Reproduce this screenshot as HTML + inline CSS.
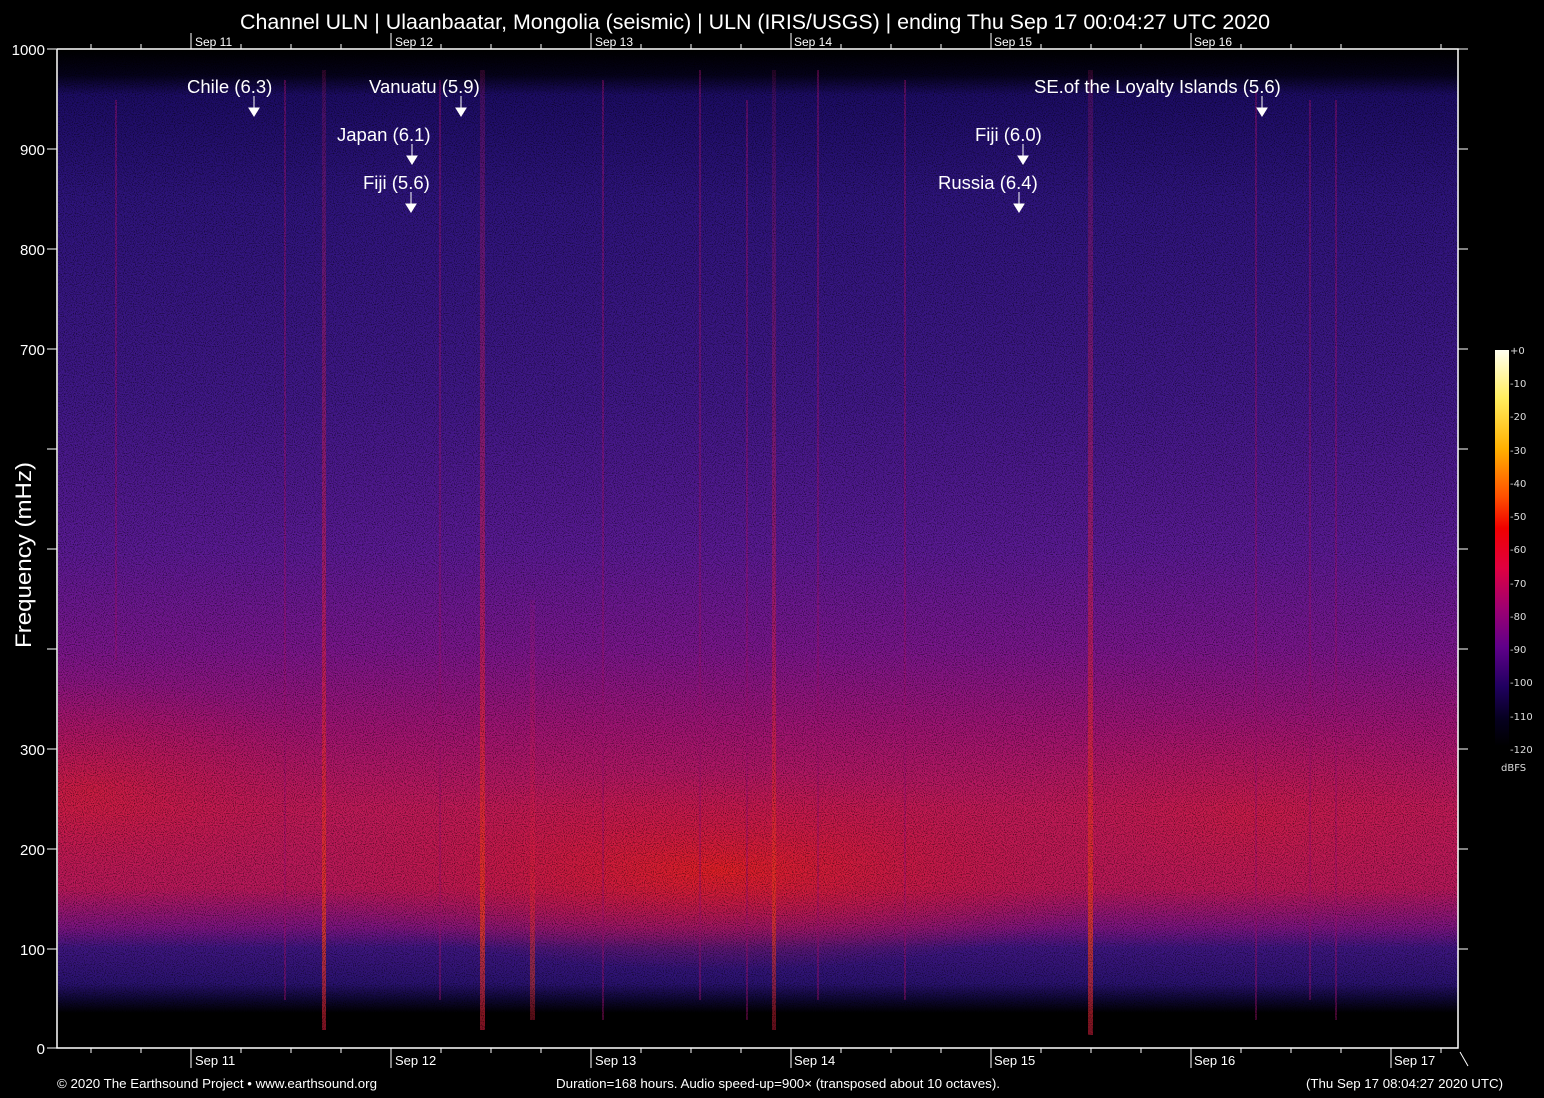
<!DOCTYPE html>
<html><head><meta charset="utf-8"><style>
html,body{margin:0;padding:0;background:#000;}
body{width:1544px;height:1098px;overflow:hidden;position:relative;font-family:"Liberation Sans",sans-serif;color:#fff;}
</style></head><body>
<svg width="1544" height="1098" viewBox="0 0 1544 1098" xmlns="http://www.w3.org/2000/svg" style="position:absolute;left:0;top:0">
<defs>
<clipPath id="pc"><rect x="58" y="50" width="1400" height="998"/></clipPath>
<linearGradient id="vg" x1="0" y1="0" x2="0" y2="1">
<stop offset="0" stop-color="#000"/>
<stop offset="0.025" stop-color="#05021a"/>
<stop offset="0.045" stop-color="#1c0c64"/>
<stop offset="0.15" stop-color="#2e147c"/>
<stop offset="0.35" stop-color="#401888"/>
<stop offset="0.5" stop-color="#5a1a94"/>
<stop offset="0.6" stop-color="#7a168c"/>
<stop offset="0.68" stop-color="#a01472"/>
<stop offset="0.76" stop-color="#c01a58"/>
<stop offset="0.84" stop-color="#b8185a"/>
<stop offset="0.88" stop-color="#7a1480"/>
<stop offset="0.9" stop-color="#3e1680"/>
<stop offset="0.935" stop-color="#2a1270"/>
<stop offset="0.95" stop-color="#100838"/>
<stop offset="0.965" stop-color="#000"/>
<stop offset="1" stop-color="#000"/>
</linearGradient>
<radialGradient id="r1" cx="0.5" cy="0.5" r="0.5">
<stop offset="0" stop-color="#e8201c" stop-opacity="0.85"/>
<stop offset="0.6" stop-color="#d0183a" stop-opacity="0.4"/>
<stop offset="1" stop-color="#c01848" stop-opacity="0"/>
</radialGradient>
<linearGradient id="ev" x1="0" y1="0" x2="0" y2="1">
<stop offset="0" stop-color="#c01870" stop-opacity="0.3"/>
<stop offset="0.6" stop-color="#e02040" stop-opacity="0.8"/>
<stop offset="0.9" stop-color="#f04018" stop-opacity="1"/>
<stop offset="1" stop-color="#e02040" stop-opacity="0.8"/>
</linearGradient>
<linearGradient id="cb" x1="0" y1="0" x2="0" y2="1">
<stop offset="0" stop-color="#fffff0"/>
<stop offset="0.12" stop-color="#ffee60"/>
<stop offset="0.25" stop-color="#ffb000"/>
<stop offset="0.37" stop-color="#ff5000"/>
<stop offset="0.45" stop-color="#f00000"/>
<stop offset="0.55" stop-color="#e00040"/>
<stop offset="0.65" stop-color="#a00070"/>
<stop offset="0.75" stop-color="#60008a"/>
<stop offset="0.85" stop-color="#200060"/>
<stop offset="0.93" stop-color="#060020"/>
<stop offset="1" stop-color="#000"/>
</linearGradient>
<filter id="nz" x="0" y="0" width="100%" height="100%">
<feTurbulence type="fractalNoise" baseFrequency="0.9" numOctaves="1" seed="3"/>
<feColorMatrix type="matrix" values="0 0 0 0 0  0 0 0 0 0  0 0 0 0 0  0 0 0 -2.6 1.4"/>
</filter>
</defs>
<g clip-path="url(#pc)">
<rect x="58" y="50" width="1400" height="998" fill="url(#vg)"/>
<ellipse cx="90" cy="790" rx="260" ry="110" fill="url(#r1)" opacity="0.5"/>
<ellipse cx="720" cy="870" rx="420" ry="100" fill="url(#r1)"/>
<ellipse cx="1250" cy="820" rx="250" ry="110" fill="url(#r1)" opacity="0.3"/>
<g opacity="0.7">
<rect x="322" y="70" width="4" height="960" fill="url(#ev)"/>
<rect x="480" y="70" width="5" height="960" fill="url(#ev)"/>
<rect x="1088" y="70" width="5" height="965" fill="url(#ev)"/>
<rect x="772" y="70" width="4" height="960" fill="url(#ev)" opacity="0.8"/>
<rect x="530" y="600" width="5" height="420" fill="url(#ev)" opacity="0.7"/>
</g>
<g stroke="#a01070" stroke-width="2" opacity="0.45">
<line x1="116" y1="100" x2="116" y2="660"/><line x1="285" y1="80" x2="285" y2="1000"/>
<line x1="440" y1="80" x2="440" y2="1000"/><line x1="603" y1="80" x2="603" y2="1020"/>
<line x1="700" y1="70" x2="700" y2="1000"/><line x1="747" y1="100" x2="747" y2="1020"/>
<line x1="818" y1="70" x2="818" y2="1000"/><line x1="905" y1="80" x2="905" y2="1000"/>
<line x1="1256" y1="90" x2="1256" y2="1020"/><line x1="1310" y1="100" x2="1310" y2="1000"/>
<line x1="1336" y1="100" x2="1336" y2="1020"/>
</g>
<rect x="58" y="50" width="1400" height="998" filter="url(#nz)" opacity="0.7"/>
</g>
<g stroke="#fff" stroke-width="1.5" fill="none">
<polyline points="57,49 57,1048 1458,1048 1458,49 57,49"/>
</g>
<g stroke="#fff" stroke-width="1">
<path d="M91,49v-5M141,49v-5M241,49v-5M291,49v-5M341,49v-5M441,49v-5M491,49v-5M541,49v-5M641,49v-5M691,49v-5M741,49v-5M841,49v-5M891,49v-5M941,49v-5M1041,49v-5M1091,49v-5M1141,49v-5M1241,49v-5M1291,49v-5M1341,49v-5M1441,49v-5"/>
<path d="M191,49v-16M391,49v-16M591,49v-16M791,49v-16M991,49v-16M1191,49v-16"/>
<path d="M91,1048v5M141,1048v5M241,1048v5M291,1048v5M341,1048v5M441,1048v5M491,1048v5M541,1048v5M641,1048v5M691,1048v5M741,1048v5M841,1048v5M891,1048v5M941,1048v5M1041,1048v5M1091,1048v5M1141,1048v5M1241,1048v5M1291,1048v5M1341,1048v5M1441,1048v5"/>
<path d="M191,1048v20M391,1048v20M591,1048v20M791,1048v20M991,1048v20M1191,1048v20M1391,1048v20"/>
<path d="M47,49h10M47,149h10M47,249h10M47,349h10M47,449h10M47,549h10M47,649h10M47,749h10M47,849h10M47,949h10M47,1048h10"/>
<path d="M1458,49h10M1458,149h10M1458,249h10M1458,349h10M1458,449h10M1458,549h10M1458,649h10M1458,749h10M1458,849h10M1458,949h10"/>
<path d="M1460,1052l8,14"/>
</g>
<g font-family="Liberation Sans, sans-serif" fill="#fff">
<text x="755" y="29" font-size="21.2" text-anchor="middle" textLength="1030" lengthAdjust="spacingAndGlyphs">Channel ULN | Ulaanbaatar, Mongolia (seismic) | ULN (IRIS/USGS) | ending Thu Sep 17 00:04:27 UTC 2020</text>
<g font-size="12"><text x="195" y="46">Sep 11</text><text x="395" y="46">Sep 12</text><text x="595" y="46">Sep 13</text><text x="794" y="46">Sep 14</text><text x="994" y="46">Sep 15</text><text x="1194" y="46">Sep 16</text></g>
<g font-size="13"><text x="195" y="1065">Sep 11</text><text x="395" y="1065">Sep 12</text><text x="595" y="1065">Sep 13</text><text x="794" y="1065">Sep 14</text><text x="994" y="1065">Sep 15</text><text x="1194" y="1065">Sep 16</text><text x="1394" y="1065">Sep 17</text></g>
<g font-size="15" text-anchor="end"><text x="45" y="55">1000</text><text x="45" y="155">900</text><text x="45" y="255">800</text><text x="45" y="355">700</text><text x="45" y="755">300</text><text x="45" y="855">200</text><text x="45" y="955">100</text><text x="45" y="1054">0</text></g>
<text transform="translate(31,555) rotate(-90)" font-size="22" text-anchor="middle" textLength="186" lengthAdjust="spacingAndGlyphs">Frequency (mHz)</text>
<g font-size="13"><text x="57" y="1088" textLength="320" lengthAdjust="spacingAndGlyphs">© 2020 The Earthsound Project • www.earthsound.org</text>
<text x="778" y="1088" text-anchor="middle" textLength="444" lengthAdjust="spacingAndGlyphs">Duration=168 hours. Audio speed-up=900× (transposed about 10 octaves).</text>
<text x="1503" y="1088" text-anchor="end" textLength="197" lengthAdjust="spacingAndGlyphs">(Thu Sep 17 08:04:27 2020 UTC)</text></g>
<g font-size="18.5"><text x="187" y="93">Chile (6.3)</text><text x="369" y="93">Vanuatu (5.9)</text><text x="337" y="141">Japan (6.1)</text><text x="363" y="189">Fiji (5.6)</text><text x="1034" y="93">SE.of the Loyalty Islands (5.6)</text><text x="975" y="141">Fiji (6.0)</text><text x="938" y="189">Russia (6.4)</text></g>
</g>
<g stroke="#fff" stroke-width="1" fill="#fff">
<path d="M254,96v12"/><path d="M249,108h10l-5,8z"/>
<path d="M461,96v12"/><path d="M456,108h10l-5,8z"/>
<path d="M412,144v12"/><path d="M407,156h10l-5,8z"/>
<path d="M411,192v12"/><path d="M406,204h10l-5,8z"/>
<path d="M1262,96v12"/><path d="M1257,108h10l-5,8z"/>
<path d="M1023,144v12"/><path d="M1018,156h10l-5,8z"/>
<path d="M1019,192v12"/><path d="M1014,204h10l-5,8z"/>
</g>
<rect x="1495" y="350" width="14" height="396" fill="url(#cb)"/>
<g font-family="DejaVu Sans, sans-serif" font-size="10" fill="#ddd">
<text x="1510" y="354">+0</text><text x="1510" y="387">-10</text><text x="1510" y="420">-20</text><text x="1510" y="454">-30</text><text x="1510" y="487">-40</text><text x="1510" y="520">-50</text><text x="1510" y="553">-60</text><text x="1510" y="587">-70</text><text x="1510" y="620">-80</text><text x="1510" y="653">-90</text><text x="1510" y="686">-100</text><text x="1510" y="720">-110</text><text x="1510" y="753">-120</text>
<text x="1501" y="771">dBFS</text>
</g>
</svg>
</body></html>
